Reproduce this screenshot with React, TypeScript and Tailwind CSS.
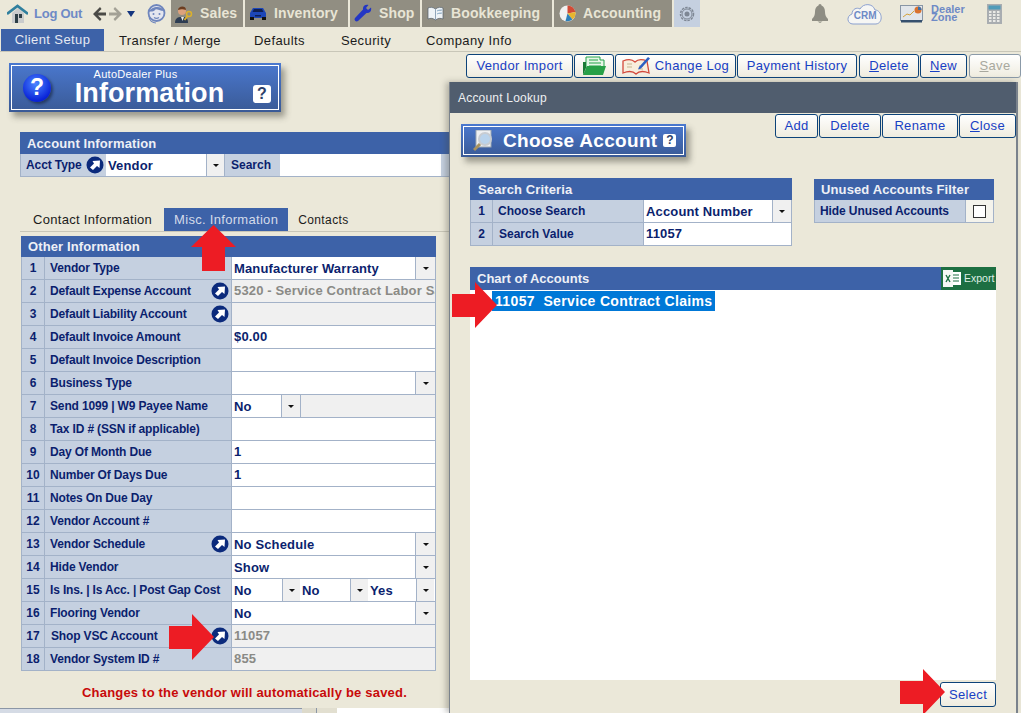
import { ReactNode } from "react";

// small drawings
const HouseIcon = () => (
  <svg width="21" height="20" viewBox="0 0 21 20">
    <path d="M5 9v10h12V9l-6-5z" fill="#c9cbcc" />
    <rect x="8" y="10" width="3" height="9" fill="#2d3e46" />
    <rect x="12" y="10" width="3" height="4" fill="#2d3e46" />
    <path d="M0 10 10.5 2 21 10" fill="none" stroke="#2f7f9e" strokeWidth="2.6" />
  </svg>
);

const ArrowBack = ({ color }: { color: string }) => (
  <svg width="14" height="16" viewBox="0 0 14 16">
    <path d="M8 1 1 8l7 7 1.500-2L6 9.500h8v-3H6L9.500 3z" fill={color} />
  </svg>
);

const FaceIcon = () => (
  <svg width="21" height="21" viewBox="0 0 21 21">
    <circle cx="10.500" cy="10" r="8" fill="#e4e6ef" stroke="#6f86bd" strokeWidth="1.800" />
    <path d="M3 9c2-6 13-7 15-1-5 0-8-3-9-1-1 2-4 1-6 2z" fill="#6f86bd" />
    <circle cx="7.500" cy="11" r="1" fill="#6f86bd" />
    <circle cx="13.500" cy="11" r="1" fill="#6f86bd" />
    <path d="M8 14.500c1.500 1 3.500 1 5 0M3 13c0 5 4 7 7 7" fill="none" stroke="#6f86bd" strokeWidth="1.200" />
  </svg>
);

const SalesIcon = () => (
  <svg width="18" height="18" viewBox="0 0 18 18">
    <path d="M0 18c0-5 3-6 6-6h2c3 0 5 1 5 6z" fill="#2c3c52" />
    <path d="m6 12 1.500 4L9 12z" fill="#e8e8e8" />
    <circle cx="7" cy="6" r="4" fill="#dca27d" />
    <path d="M3 5c0-4 8-5 8 0-3-1-5-1-8 0z" fill="#6b3d21" />
    <circle cx="14" cy="9" r="2.500" fill="none" stroke="#dcb12c" strokeWidth="1.500" />
    <path d="m12.500 11-3 4" stroke="#dcb12c" strokeWidth="1.800" />
  </svg>
);

const CarIcon = () => (
  <svg width="18" height="13" viewBox="0 0 18 13">
    <path d="M1 6 4 1h10l3 5v5H1z" fill="#1c46b8" />
    <path d="M5 2h8l1.500 3h-11z" fill="#0e1f52" />
    <rect x="1" y="10" width="4" height="3" fill="#111" />
    <rect x="13" y="10" width="4" height="3" fill="#111" />
    <rect x="6" y="8" width="6" height="1.500" fill="#0e1f52" />
  </svg>
);

const WrenchIcon = () => (
  <svg width="18" height="19" viewBox="0 0 18 19">
    <path d="M17 3.500 14 6l-2-2 2.500-3c-3-1-6 1-5.500 4.500L1 14c-1.500 2 1 4.500 3 3l8.500-8c3 .5 5.500-2 4.500-5.500z" fill="#2336c4" />
  </svg>
);

const BookIcon = () => (
  <svg width="17" height="16" viewBox="0 0 17 16">
    <path d="M8.500 3C6 1 3 1 1 2v11c2-1 5-1 7.500 1 2.500-2 5.500-2 7.500-1V2c-2-1-5-1-7.500 1z" fill="#eef3f6" stroke="#55606a" strokeWidth=".7" />
    <path d="M8.500 3v11" stroke="#90a5b8" />
    <path d="M10 5c2-1 3-1 5-1M10 8c2-1 3-1 5-1" stroke="#8fb4d2" />
  </svg>
);

const PieIcon = () => (
  <svg width="17" height="17" viewBox="0 0 17 17">
    <circle cx="8.500" cy="8.500" r="8" fill="#f1f1f1" />
    <path d="M8.500 8.500V.5a8 8 0 0 1 8 6.500z" fill="#d24a35" />
    <path d="M8.500 8.500 16.500 7a8 8 0 0 1-3 7.500z" fill="#e7b52f" />
    <path d="m8.500 8.500 5 6a8 8 0 0 1-7 1.500z" fill="#2d7fb8" />
  </svg>
);

const GearIcon = () => (
  <svg width="18" height="18" viewBox="0 0 18 18">
    <circle cx="9" cy="9" r="6.500" fill="none" stroke="#7e8794" strokeWidth="1.500" strokeDasharray="2.500 1" />
    <circle cx="9" cy="9" r="5" fill="none" stroke="#7e8794" />
    <circle cx="9" cy="9" r="2.500" fill="#7e8794" />
  </svg>
);

const BellIcon = () => (
  <svg width="16" height="19" viewBox="0 0 16 19">
    <path d="M8 0c1 0 1.500.8 1.500 1.500C12 2.500 13 5 13 8c0 3 1 5 3 7H0c2-2 3-4 3-7 0-3 1-5.500 3.500-6.500C6.500.8 7 0 8 0z" fill="#8e8d83" />
    <rect x="0" y="15" width="16" height="2" fill="#8e8d83" />
    <path d="M5.500 17.500h5L8 19z" fill="#8e8d83" />
  </svg>
);

const CloudIcon = () => (
  <svg className="absolute inset-0" width="36" height="23" viewBox="0 0 36 23">
    <path d="M6 22c-6 0-7-8-1-10 0-5 5-7 8-5 3-6 13-6 15 1 7 0 9 13 1 14z" fill="#f6f6f4" stroke="#8ba0cf" strokeWidth="1" />
  </svg>
);

const DashIcon = () => (
  <svg width="23" height="18" viewBox="0 0 23 18">
    <rect x=".5" y=".5" width="22" height="15" fill="#e2e6ea" stroke="#8896a5" />
    <rect x="1" y="15" width="21" height="2.500" fill="#36506e" />
    <path d="m3 12 4-3 3 1 4-4" fill="none" stroke="#d4a23a" />
    <circle cx="18" cy="5" r="3.500" fill="#d9722f" />
    <path d="M18 5V1.500A3.500 3.500 0 0 1 21.500 5z" fill="#3e6fa8" />
  </svg>
);

const CalcIcon = () => (
  <svg width="15" height="20" viewBox="0 0 15 20">
    <rect width="15" height="20" fill="#a9adb1" />
    <rect x="1.500" y="1.500" width="12" height="4" fill="#4f9bb9" />
    {[7, 10, 13, 16].map((y) =>
      [2, 6, 10].map((x) => <rect key={`${x}-${y}`} x={x} y={y} width="2.500" height="2" fill="#e9e9e6" />)
    )}
  </svg>
);

const FolderIcon = () => (
  <svg width="23" height="20" viewBox="0 0 23 20">
    <path d="M3 1h14v3h4v8H3z" fill="#e6f6e6" stroke="#22a34a" />
    <path d="M6 4h9M6 7h12M6 10h12" stroke="#22a34a" />
    <path d="M4 10h19l-3 9H0z" fill="#27a047" />
    <path d="M0 19V6h3v6z" fill="#1b7a36" />
  </svg>
);

const LogIcon = () => (
  <svg width="28" height="20" viewBox="0 0 28 20">
    <path d="M1 5c5-2 9-2 12 1 3-3 7-3 12-1l2 12c-5-2-10-2-13 1-3-3-8-3-13-1z" fill="#f8eedd" stroke="#d3493b" strokeWidth="1.300" />
    <path d="M5 8h5M5 11h5M17 10h4M17 13h4" stroke="#c5b48f" />
    <path d="m17 11 9-10 2 1.500-9 10-3 1z" fill="#2c5fc2" />
  </svg>
);

const QuestionOrb = () => (
  <div className="w-[28px] h-[28px] rounded-full bg-[radial-gradient(circle_at_45%_35%,#4a86ff,#0a24d9_70%,#061290)] flex items-center justify-center text-white font-bold text-[23px] leading-none shadow-[2px_2px_3px_rgba(0,0,0,0.4)]">
    ?
  </div>
);

const HelpBadge = ({ small }: { small?: boolean }) => (
  <div
    className={
      small
        ? "w-[13px] h-[13px] rounded-[2px] bg-white text-[#2c3f6a] font-bold text-[12px] leading-[13px] text-center"
        : "w-[18px] h-[18px] rounded-[3px] bg-white text-[#2c3f6a] font-bold text-[16px] leading-[18px] text-center"
    }
  >
    ?
  </div>
);

const LinkIcon = () => (
  <svg width="18" height="18" viewBox="0 0 18 18" className="shrink-0">
    <circle cx="9" cy="9" r="8.500" fill="#0b2a7c" />
    <path d="M6.500 5 14 4.500 13.500 12 11 10 7 14 4 11.500 8 7.500z" fill="#fff" />
  </svg>
);

const Caret = () => (
  <svg width="6" height="3" viewBox="0 0 6 3">
    <path d="M0 0h6L3 3z" fill="#111" />
  </svg>
);

// red markers laid over the screenshot
const RedArrow = ({ className, up }: { className: string; up?: boolean }) => (
  <svg className={className} width="45" height="46" viewBox="0 0 45 46">
    {up ? (
      <path d="M22.500 0 45 22H34v24H11V22H0z" fill="#ed1c24" />
    ) : (
      <path d="M0 12h23V0l22 23-22 23V35H0z" fill="#ed1c24" />
    )}
  </svg>
);

const TopTab = ({ icon, label, width }: { icon: ReactNode; label: string; width: string }) => (
  <div className={`${width} h-[27px] bg-[#918e82] flex items-center pl-[4px] gap-[7px] text-[#e8e5d5] text-[14px] font-bold tracking-[0.1px]`}>
    <div className="w-[18px] flex justify-center shrink-0">{icon}</div>
    <span>{label}</span>
  </div>
);

const ToolButton = ({ children, width, faded }: { children: ReactNode; width: string; faded?: boolean }) => (
  <button
    className={`${width} h-[24px] shrink-0 rounded-[3px] border bg-gradient-to-b from-white to-[#efecdf] flex items-center justify-center gap-[5px] text-[13px] tracking-[0.35px] ${
      faded ? "text-[#a8a89e] border-[#8b9aa8]" : "text-[#1840c4] border-[#0d4379]"
    }`}
  >
    {children}
  </button>
);

const Select = ({ value, width, arrow = "w-[20px]" }: { value: string; width: string; arrow?: string }) => (
  <div className={`${width} h-full flex bg-white`}>
    <div className="flex-1 pl-[2px] pt-[1px] flex items-center text-[13px] font-bold tracking-[0.15px] text-[#0b1f6e] whitespace-nowrap overflow-hidden">
      {value}
    </div>
    <div className={`${arrow} shrink-0 bg-[#f0f0f0] border-l border-[#a3b2c8] flex items-center justify-center`}>
      <Caret />
    </div>
  </div>
);

const Row = ({ n, label, link, indent, children }: { n: number; label: string; link?: boolean; indent?: boolean; children?: ReactNode }) => (
  <div className="h-[23px] flex border-b border-[#a3b2c8] border-l border-r">
    <div className="w-[23px] shrink-0 bg-[#c5d0e0] border-r border-[#a3b2c8] flex items-center justify-center text-[12px] font-bold text-[#0b1f6e]">
      {n}
    </div>
    <div className="w-[187px] shrink-0 bg-[#c5d0e0] border-r border-[#a3b2c8] flex items-center justify-between pr-[2px] pl-[5px]">
      <span className={`text-[12px] font-bold text-[#0b1f6e] tracking-[-0.15px] whitespace-nowrap ${indent ? "pl-[1px]" : ""}`}>{label}</span>
      {link && <LinkIcon />}
    </div>
    <div className="flex-1 min-w-0 bg-white flex">{children}</div>
  </div>
);

const Value = ({ text }: { text: string }) => (
  <div className="pl-[2px] h-full flex items-center text-[13px] font-bold text-[#0b1f6e] tracking-[0.15px]">{text}</div>
);

const ReadOnly = ({ text }: { text?: string }) => (
  <div className="flex-1 bg-[#f0f0f0] pl-[2px] flex items-center text-[13px] font-bold text-[#8a8a86] tracking-[0.15px] whitespace-nowrap overflow-hidden">
    {text}
  </div>
);

const Header = ({ title, className }: { title: string; className: string }) => (
  <div className={`bg-[#3d62a8] text-[#eef0f6] text-[13px] pt-[1px] font-bold flex items-center tracking-[0.12px] ${className}`}>{title}</div>
);

const App = () => {
  return (
    <div className="relative w-[1021px] h-[713px] overflow-hidden bg-[#ebe8d9] flex flex-col font-['Liberation_Sans',Arial,sans-serif]">
      {/* top bar */}
      <div className="h-[27px] flex items-center shrink-0">
        <div className="ml-[7px] w-[20px]">
          <HouseIcon />
        </div>
        <span className="ml-[7px] text-[13px] font-bold text-[#6e8ac6] tracking-[-0.25px]">Log Out</span>
        <div className="ml-[10px] flex items-center gap-[3px]">
          <ArrowBack color="#4b4b47" />
          <div className="-scale-x-100">
            <ArrowBack color="#a3a196" />
          </div>
          <svg width="8" height="6" viewBox="0 0 8 6" className="ml-[1px]">
            <path d="M0 0h8L4 6z" fill="#14357f" />
          </svg>
        </div>
        <div className="ml-[11px] mr-[4px]">
          <FaceIcon />
        </div>
        <div className="flex items-center gap-[2px]">
          <TopTab width="w-[72px]" label="Sales" icon={<SalesIcon />} />
          <TopTab width="w-[103px]" label="Inventory" icon={<CarIcon />} />
          <TopTab width="w-[70px]" label="Shop" icon={<WrenchIcon />} />
          <TopTab width="w-[130px]" label="Bookkeeping" icon={<BookIcon />} />
          <TopTab width="w-[118px]" label="Accounting" icon={<PieIcon />} />
          <div className="w-[26px] h-[27px] bg-[#c5d0e0] flex items-center justify-center">
            <GearIcon />
          </div>
        </div>
        <div className="ml-[112px]">
          <BellIcon />
        </div>
        <div className="relative ml-[19px] w-[36px] h-[23px] flex items-center justify-center">
          <CloudIcon />
          <span className="relative text-[10px] font-bold text-[#6e8ac6] mt-[3px]">CRM</span>
        </div>
        <div className="ml-[17px]">
          <DashIcon />
        </div>
        <div className="ml-[8px] -mt-[2px] text-[11px] leading-[8px] font-bold text-[#6e8ac6] w-[35px]">Dealer Zone</div>
        <div className="ml-[21px]">
          <CalcIcon />
        </div>
      </div>

      {/* sub nav */}
      <div className="mt-[2px] h-[23px] shrink-0 border-b border-[#c8c6b8] flex items-stretch text-[13px] tracking-[0.4px] text-[#1b1b1b]">
        <div className="ml-[1px] w-[103px] bg-[#3d62a8] text-[#e6e9f2] flex items-center justify-center">Client Setup</div>
        <div className="ml-[15px] pt-[1px] flex items-center">Transfer / Merge</div>
        <div className="ml-[33px] pt-[1px] flex items-center">Defaults</div>
        <div className="ml-[36px] pt-[1px] flex items-center">Security</div>
        <div className="ml-[35px] pt-[1px] flex items-center">Company Info</div>
      </div>

      <div className="flex flex-1 min-h-0">
        {/* left column */}
        <div className="w-[449px] shrink-0 flex flex-col">
          <div className="ml-[9px] mt-[11px] w-[272px] h-[49px] p-[2px] bg-gradient-to-b from-[#4a78cf] to-[#3a5a96] shadow-[4px_5px_6px_rgba(60,60,50,0.45)]">
            <div className="h-full border border-white flex items-center pl-[11px] pr-[7px]">
              <QuestionOrb />
              <div className="flex-1 flex flex-col items-center text-white pr-[5px]">
                <span className="text-[11px] leading-[11px] tracking-[0.3px] mr-[28px]">AutoDealer Plus</span>
                <span className="text-[27px] leading-[26px] font-bold tracking-[0.1px]">Information</span>
              </div>
              <div className="mt-[13px]">
                <HelpBadge />
              </div>
            </div>
          </div>

          <div className="ml-[20px] mt-[20px]">
            <Header title="Account Information" className="h-[22px] pl-[7px]" />
            <div className="h-[23px] flex border-b border-l border-[#a3b2c8]">
              <div className="w-[85px] shrink-0 bg-[#c5d0e0] flex items-center justify-between pl-[5px] pr-[2px]">
                <span className="text-[12px] font-bold text-[#0b1f6e] tracking-[-0.1px]">Acct Type</span>
                <LinkIcon />
              </div>
              <Select value="Vendor" width="w-[118px]" arrow="w-[18px]" />
              <div className="w-[56px] shrink-0 bg-[#c5d0e0] border-l border-[#a3b2c8] flex items-center pl-[6px]">
                <span className="text-[12px] font-bold text-[#0b1f6e]">Search</span>
              </div>
              <div className="w-[161px] shrink-0 bg-white" />
              <div className="flex-1 bg-[#c5d0e0]" />
            </div>
          </div>

          <div className="ml-[20px] mt-[31px] h-[24px] border-b border-[#c8c6b8] flex items-stretch text-[13px] tracking-[0.3px] text-[#1b1b1b]">
            <div className="ml-[13px] flex items-center">Contact Information</div>
            <div className="ml-[12px] w-[124px] h-[23px] bg-[#3d62a8] text-[#d4dbea] flex items-center justify-center">Misc. Information</div>
            <div className="ml-[10px] flex items-center text-[12px] tracking-[0.4px]">Contacts</div>
          </div>

          <div className="ml-[21px] mt-[4px] w-[415px]">
            <Header title="Other Information" className="h-[21px] pl-[7px]" />
            <Row n={1} label="Vendor Type">
              <Select value="Manufacturer Warranty" width="w-full" />
            </Row>
            <Row n={2} label="Default Expense Account" link>
              <ReadOnly text="5320 - Service Contract Labor Sales" />
            </Row>
            <Row n={3} label="Default Liability Account" link>
              <ReadOnly />
            </Row>
            <Row n={4} label="Default Invoice Amount">
              <Value text="$0.00" />
            </Row>
            <Row n={5} label="Default Invoice Description" />
            <Row n={6} label="Business Type">
              <Select value="" width="w-full" />
            </Row>
            <Row n={7} label="Send 1099 | W9 Payee Name">
              <Select value="No" width="w-[68px]" arrow="w-[19px]" />
              <div className="flex-1 bg-[#f0f0f0] border-l border-[#a3b2c8]" />
            </Row>
            <Row n={8} label="Tax ID # (SSN if applicable)" />
            <Row n={9} label="Day Of Month Due">
              <Value text="1" />
            </Row>
            <Row n={10} label="Number Of Days Due">
              <Value text="1" />
            </Row>
            <Row n={11} label="Notes On Due Day" />
            <Row n={12} label="Vendor Account #" />
            <Row n={13} label="Vendor Schedule" link>
              <Select value="No Schedule" width="w-full" />
            </Row>
            <Row n={14} label="Hide Vendor">
              <Select value="Show" width="w-full" />
            </Row>
            <Row n={15} label="Is Ins. | Is Acc. | Post Gap Cost">
              <Select value="No" width="w-[68px]" arrow="w-[18px]" />
              <Select value="No" width="w-[68px]" arrow="w-[18px]" />
              <Select value="Yes" width="w-[66px]" arrow="w-[18px]" />
            </Row>
            <Row n={16} label="Flooring Vendor">
              <Select value="No" width="w-full" />
            </Row>
            <Row n={17} label="Shop VSC Account" link indent>
              <ReadOnly text="11057" />
            </Row>
            <Row n={18} label="Vendor System ID #">
              <ReadOnly text="855" />
            </Row>
          </div>

          <div className="mt-[12px] ml-[82px] text-[13px] font-bold text-[#c80a0a] tracking-[0.2px] whitespace-nowrap">
            Changes to the vendor will automatically be saved.
          </div>

          {/* bottom edge of what sits behind */}
          <div className="mt-auto h-[5px] flex">
            <div className="w-[302px] bg-[#d5dbe5] border-t border-[#8b96a6]" />
            <div className="w-[14px] bg-[#dddacb]" />
            <div className="w-[21px] bg-[#e2dfd0] border-l border-[#8b96a6]" />
            <div className="flex-1 bg-white" />
          </div>
        </div>

        {/* right column */}
        <div className="flex-1 min-w-0 flex flex-col">
          <div className="mt-[2px] ml-[17px] flex gap-[1px] whitespace-nowrap">
            <ToolButton width="w-[107px]">Vendor Import</ToolButton>
            <ToolButton width="w-[40px]">
              <FolderIcon />
            </ToolButton>
            <ToolButton width="w-[121px]">
              <LogIcon />
              Change Log
            </ToolButton>
            <ToolButton width="w-[120px]">Payment History</ToolButton>
            <ToolButton width="w-[60px] ml-[1px]">
              <span>
                <u>D</u>elete
              </span>
            </ToolButton>
            <ToolButton width="w-[47px]">
              <span>
                <u>N</u>ew
              </span>
            </ToolButton>
            <ToolButton width="w-[52px] ml-[1px]" faded>
              <span>
                <u>S</u>ave
              </span>
            </ToolButton>
          </div>

          {/* account lookup window */}
          <div className="mt-[4px] w-[569px] flex-1 min-h-0 flex flex-col bg-[#ebe8d9] border-l border-r-2 border-[#7a828c] shadow-[-3px_0_6px_rgba(70,70,60,0.35)]">
            <div className="h-[31px] shrink-0 bg-[#505d6e] text-[#eef0f2] text-[12px] tracking-[0.2px] flex items-center pl-[8px]">Account Lookup</div>

            <div className="flex items-start">
              <div className="ml-[11px] mt-[11px] w-[225px] h-[33px] p-[2px] bg-gradient-to-b from-[#4a78cf] to-[#3a5a96] shadow-[4px_5px_6px_rgba(60,60,50,0.45)]">
                <div className="h-full border border-white flex items-center pl-[9px] gap-[6px] text-white">
                  <svg width="24" height="22" viewBox="0 0 24 22" className="shrink-0">
                    <rect x="3" y="0" width="15" height="17" fill="#eef0f2" stroke="#9aa5b1" />
                    <circle cx="12" cy="9" r="6" fill="#b9d3ec" stroke="#c7ccd2" strokeWidth="2" />
                    <path d="m7 14-6 6" stroke="#a8925f" strokeWidth="3" />
                  </svg>
                  <span className="text-[19px] leading-none font-bold tracking-[0.3px] whitespace-nowrap">Choose Account</span>
                  <HelpBadge small />
                </div>
              </div>
              <div className="ml-[89px] mt-[1px] flex gap-[1px]">
                <ToolButton width="w-[43px]">Add</ToolButton>
                <ToolButton width="w-[62px]">Delete</ToolButton>
                <ToolButton width="w-[76px]">Rename</ToolButton>
                <ToolButton width="w-[57px]">
                  <span>
                    <u>C</u>lose
                  </span>
                </ToolButton>
              </div>
            </div>

            <div className="mt-[21px] ml-[20px] flex items-start">
              <div className="w-[322px]">
                <Header title="Search Criteria" className="h-[22px] pl-[8px]" />
                <div className="h-[23px] flex border-b border-l border-r border-[#a3b2c8]">
                  <div className="w-[22px] shrink-0 bg-[#c5d0e0] border-r border-[#a3b2c8] flex items-center justify-center text-[12px] font-bold text-[#0b1f6e]">1</div>
                  <div className="w-[151px] shrink-0 bg-[#c5d0e0] border-r border-[#a3b2c8] flex items-center pl-[5px] text-[12px] font-bold text-[#0b1f6e]">Choose Search</div>
                  <Select value="Account Number" width="flex-1" arrow="w-[19px]" />
                </div>
                <div className="h-[23px] flex border-b border-l border-r border-[#a3b2c8]">
                  <div className="w-[22px] shrink-0 bg-[#c5d0e0] border-r border-[#a3b2c8] flex items-center justify-center text-[12px] font-bold text-[#0b1f6e]">2</div>
                  <div className="w-[151px] shrink-0 bg-[#c5d0e0] border-r border-[#a3b2c8] flex items-center pl-[6px] text-[12px] font-bold text-[#0b1f6e]">Search Value</div>
                  <div className="flex-1 bg-white">
                    <Value text="11057" />
                  </div>
                </div>
              </div>
              <div className="ml-[22px] mt-[1px] w-[180px]">
                <Header title="Unused Accounts Filter" className="h-[21px] pl-[7px]" />
                <div className="h-[23px] flex border-b border-l border-r border-[#a3b2c8]">
                  <div className="flex-1 bg-[#c5d0e0] flex items-center pl-[5px] text-[12px] font-bold text-[#0b1f6e] tracking-[-0.1px]">Hide Unused Accounts</div>
                  <div className="w-[28px] shrink-0 bg-[#f4f3ec] border-l border-[#a3b2c8] flex items-center justify-center">
                    <div className="w-[13px] h-[13px] bg-white border border-[#333]" />
                  </div>
                </div>
              </div>
            </div>

            <div className="mt-[21px] ml-[20px] w-[526px] h-[413px] flex flex-col">
              <div className="h-[23px] shrink-0 bg-[#3d62a8] flex items-center justify-between">
                <span className="pl-[7px] pt-[1px] text-[#eef0f6] text-[13px] font-bold">Chart of Accounts</span>
                <div className="w-[55px] h-full bg-[#1d6f42] flex items-center gap-[3px] pl-[2px] text-[10.500px] text-[#dfeee5]">
                  <svg width="18" height="17" viewBox="0 0 18 17" className="shrink-0">
                    <rect x="8" y="2" width="10" height="13" fill="#fff" />
                    <path d="M10 5h6M10 8h6M10 11h6" stroke="#1d6f42" />
                    <rect x="0" y="0" width="10" height="17" fill="#f5f7f5" />
                    <path d="m3 5 4 7M7 5l-4 7" stroke="#1d6f42" strokeWidth="1.400" />
                  </svg>
                  Export
                </div>
              </div>
              <div className="flex-1 bg-white pt-[1px]">
                <div className="ml-[22px] w-[223px] h-[20px] bg-[#0078d7] text-white text-[14px] font-bold tracking-[0.35px] pl-[3px] flex items-center whitespace-pre">
                  11057  Service Contract Claims
                </div>
              </div>
            </div>

            <div className="mt-[2px] ml-[490px]">
              <ToolButton width="w-[56px] !h-[25px]">Select</ToolButton>
            </div>
          </div>
        </div>
      </div>

      <RedArrow up className="absolute left-[191px] top-[225px]" />
      <RedArrow className="absolute left-[169px] top-[614px]" />
      <RedArrow className="absolute left-[452px] top-[282px]" />
      <RedArrow className="absolute left-[900px] top-[669px]" />
    </div>
  );
};

export default App;
